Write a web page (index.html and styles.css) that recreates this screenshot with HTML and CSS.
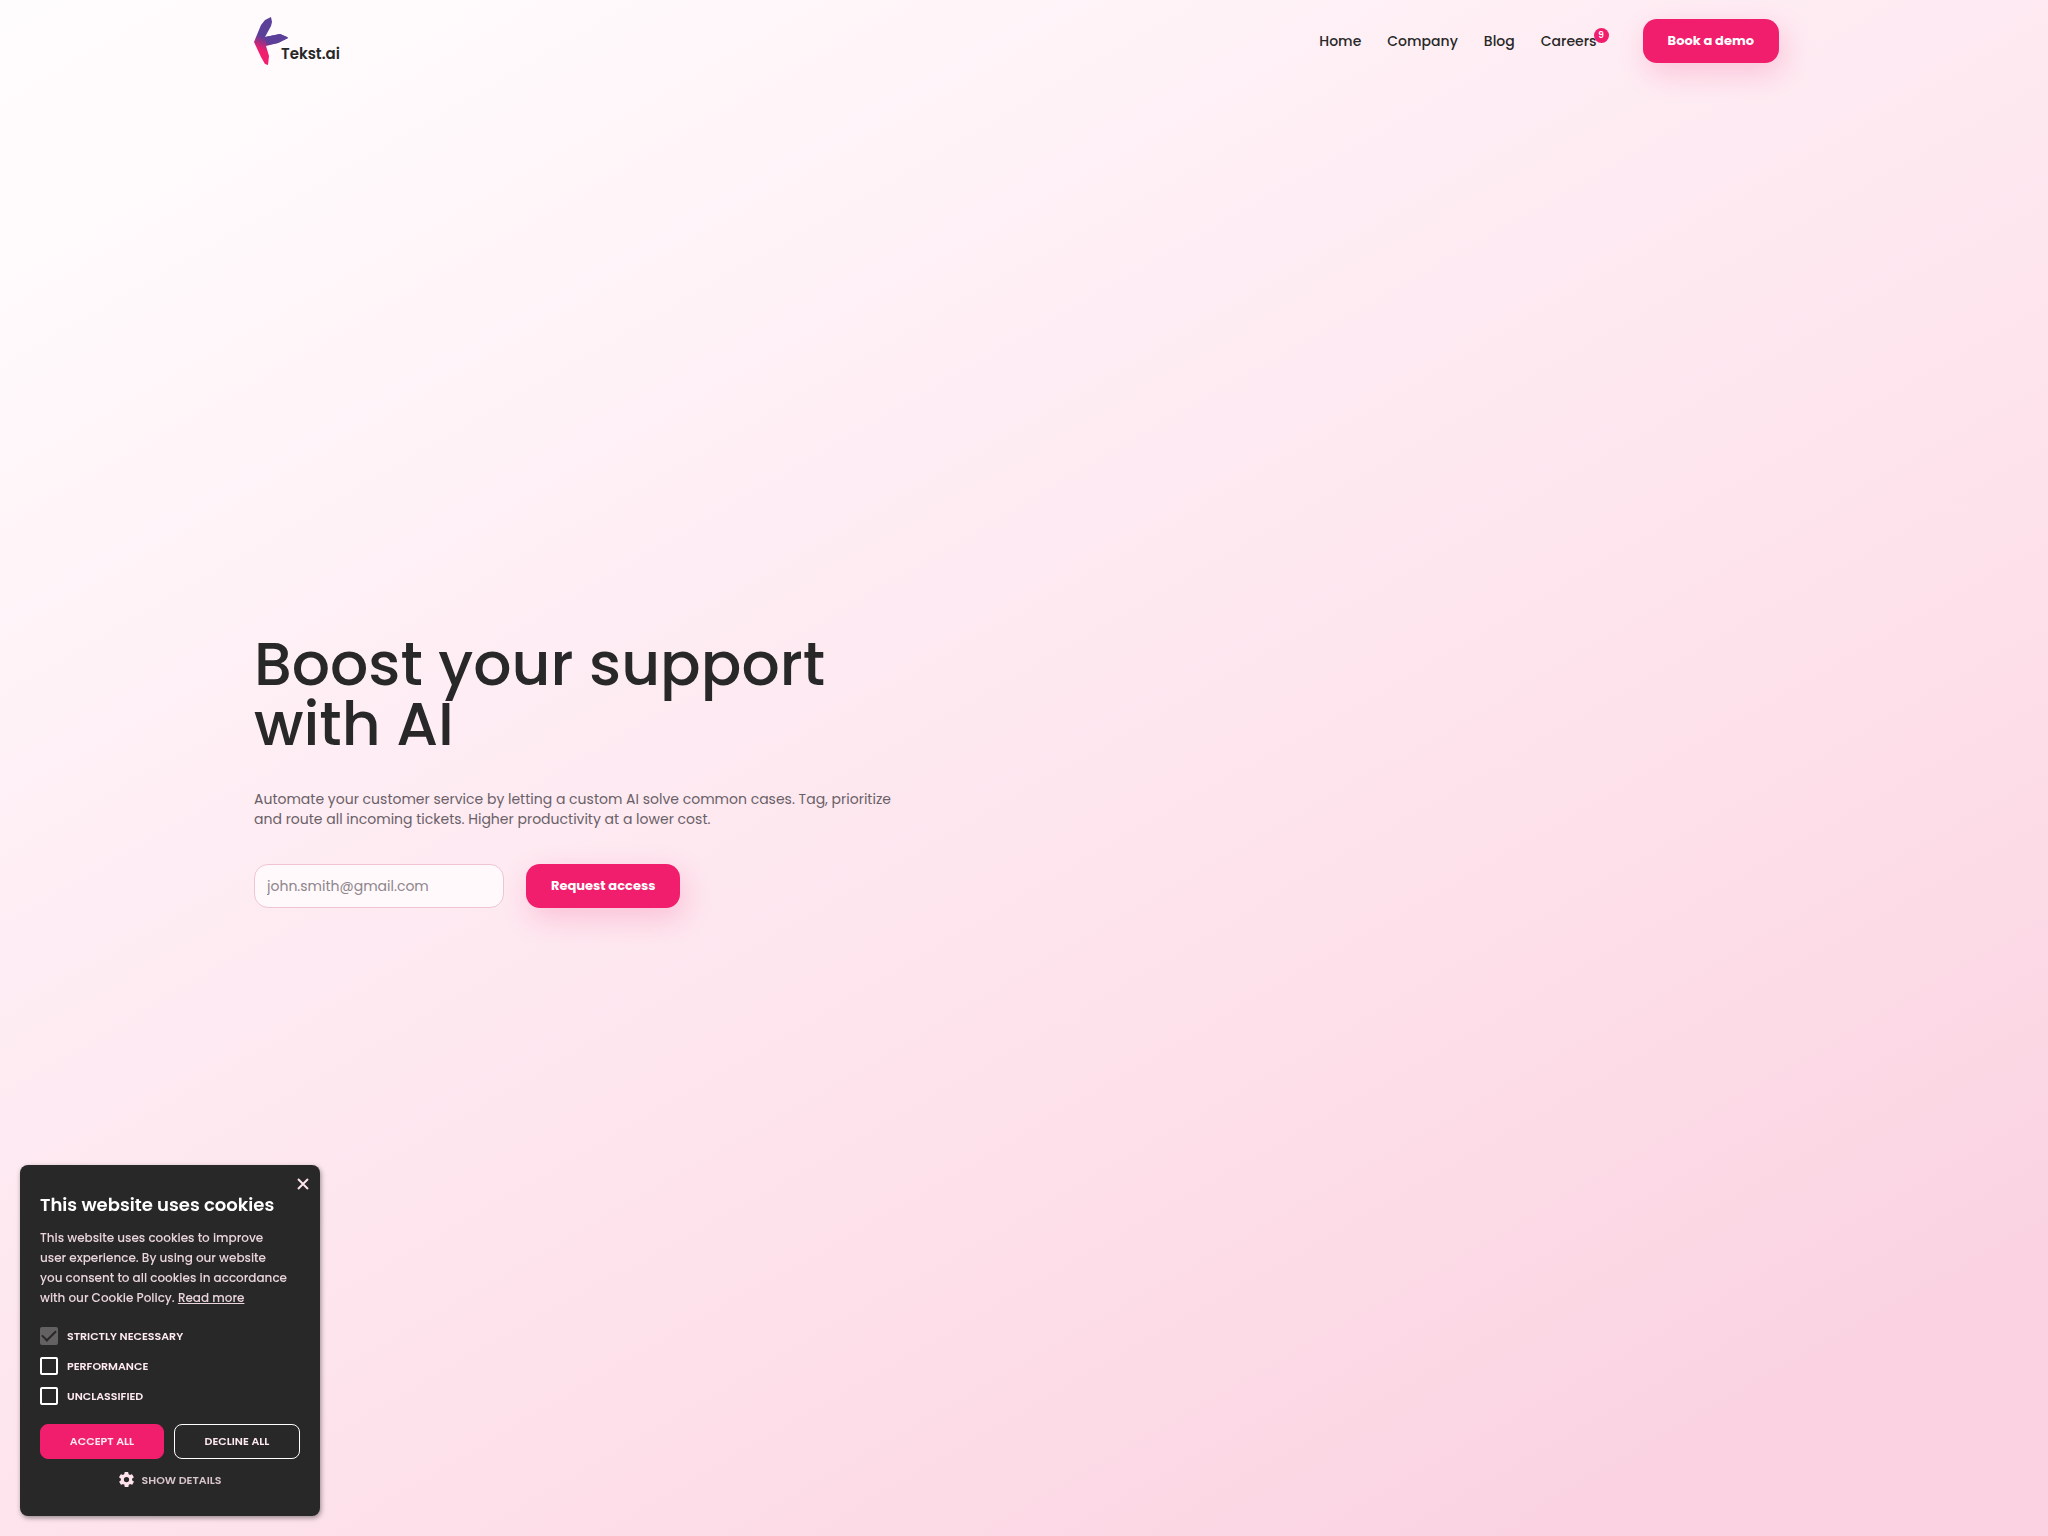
FILE: index.html
```html
<!DOCTYPE html>
<html lang="en">
<head>
  <meta charset="UTF-8" />
  <meta name="viewport" content="width=device-width, initial-scale=1.0"/>
  <title>Tekst.ai</title>
  <link rel="stylesheet" href="styles.css">
</head>
<body>
  <header class="header container">
    <a href="#" class="logo">
      <svg class="logo-mark" viewBox="0 0 36 50" aria-hidden="true">
        <defs>
          <linearGradient id="fade" gradientUnits="userSpaceOnUse" x1="10" y1="21" x2="5" y2="33">
            <stop offset="0" stop-color="#5b3f99"/>
            <stop offset="1" stop-color="#f01e6c"/>
          </linearGradient>
        </defs>
        <path fill="url(#fade)" d="M17 1 L18 6 L17 10 L11 21 L26 18 L33 21 L34 22 L24 27 L12 30 L15 40 L14 49 L11 48 L7 41 L0 26 L7 9 L11 4 Z"/>
        <path fill="#5b3f99" d="M11 21 L26 18 L33 21 L34 22 L24 27 L13 29 Z"/>
      </svg>
      <span class="logo-name">Tekst.ai</span>
    </a>
    <nav class="nav">
      <a href="#">Home</a>
      <a href="#">Company</a>
      <a href="#">Blog</a>
      <a href="#" class="careers">Careers<span class="badge">9</span></a>
      <button type="button" class="btn">Book a demo</button>
    </nav>
  </header>

  <main class="hero container">
    <h1>Boost your support<br>with AI</h1>
    <p>Automate your customer service by letting a custom AI solve common cases. Tag, prioritize<br>and route all incoming tickets. Higher productivity at a lower cost.</p>
    <form class="access-form">
      <input type="email" placeholder="john.smith@gmail.com" aria-label="Email" />
      <button type="submit" class="btn">Request access</button>
    </form>
  </main>

  <aside class="cookies">
    <button type="button" class="close" aria-label="Close">
      <svg viewBox="0 0 12 12" aria-hidden="true"><path d="M1 1 L11 11 M11 1 L1 11"/></svg>
    </button>
    <h2>This website uses cookies</h2>
    <p>This website uses cookies to improve<br>user experience. By using our website<br>you consent to all cookies in accordance<br>with our Cookie Policy. <a href="#">Read more</a></p>
    <div class="options">
      <label><input type="checkbox" checked disabled />Strictly necessary</label>
      <label><input type="checkbox" />Performance</label>
      <label><input type="checkbox" />Unclassified</label>
    </div>
    <div class="actions">
      <button type="button" class="accept">Accept all</button>
      <button type="button" class="decline">Decline all</button>
    </div>
    <button type="button" class="details">
      <svg viewBox="2 2 20 20" aria-hidden="true"><path d="M19.4 13a7.500 7.500 0 0 0 0-2l2.100-1.600a.5.5 0 0 0 .1-.7l-2-3.400a.5.5 0 0 0-.6-.2l-2.500 1a7 7 0 0 0-1.700-1l-.4-2.600a.5.5 0 0 0-.5-.5h-4a.5.5 0 0 0-.5.500l-.4 2.600a7 7 0 0 0-1.700 1l-2.500-1a.5.5 0 0 0-.6.200l-2 3.400a.5.5 0 0 0 .1.700L4.600 11a7.500 7.500 0 0 0 0 2l-2.100 1.600a.5.5 0 0 0-.1.700l2 3.400c.1.200.4.300.6.200l2.500-1a7 7 0 0 0 1.700 1l.4 2.600c0 .3.200.5.500.5h4c.3 0 .5-.2.500-.5l.4-2.600a7 7 0 0 0 1.700-1l2.500 1c.2.100.5 0 .6-.2l2-3.400a.5.5 0 0 0-.1-.7zM12 15.500a3.500 3.500 0 1 1 0-7 3.500 3.500 0 0 1 0 7z"/></svg>
      Show details
    </button>
  </aside>
</body>
</html>
```
FILE: styles.css
```css
* {
  box-sizing: border-box;
  padding: 0;
  margin: 0;
}

body {
  display: flex;
  flex-direction: column;
  min-height: 100vh;
  font-family: Poppins, Inter, sans-serif;
  color: #282828;
  background: linear-gradient(150deg, #fffcfd 0%, #fffafc 10%, #feecf3 38%, #fddfe9 67%, #fad2e1 90%);
}

a {
  color: inherit;
}

button,
input {
  font-family: inherit;
}

button {
  cursor: pointer;
}

.container {
  width: 100%;
  max-width: 1540px;
  margin: 0 auto;
  padding-right: 15px;
}

.header {
  display: flex;
  justify-content: space-between;
  align-items: center;
  height: 82px;
}

.logo {
  display: flex;
  align-items: flex-end;
  height: 50px;
  text-decoration: none;
}

.logo-mark {
  width: 36px;
  height: 50px;
}

.logo-name {
  margin-left: -9px;
  padding-bottom: 4px;
  font-size: 15px;
  font-weight: 600;
  line-height: 16px;
}

.nav {
  display: flex;
  align-items: center;
  gap: 26px;
  font-size: 14px;
  font-weight: 500;
}

.nav a {
  text-decoration: none;
}

.nav .btn {
  margin-left: 20px;
}

.careers {
  position: relative;
}

.badge {
  position: absolute;
  top: -3px;
  right: -12px;
  width: 15px;
  height: 15px;
  border-radius: 50%;
  background-color: #f01e6c;
  color: white;
  font-size: 9px;
  font-weight: 600;
  line-height: 15px;
  text-align: center;
}

.btn {
  height: 44px;
  padding: 0 25px;
  border: none;
  border-radius: 14px;
  background-color: #f01e6c;
  box-shadow: 4px 10px 30px rgba(240, 30, 108, 0.2);
  color: white;
  font-size: 13px;
  font-weight: 700;
}

.hero {
  flex: 1;
  display: flex;
  flex-direction: column;
  justify-content: center;
  padding-bottom: 76px;
}

.hero h1 {
  font-size: 60px;
  font-weight: 500;
  line-height: 60px;
}

.hero p {
  margin: 35px 0;
  color: #696067;
  font-size: 14px;
  line-height: 20px;
}

.access-form {
  display: flex;
  gap: 22px;
}

.access-form input {
  width: 250px;
  height: 44px;
  padding: 0 12px;
  border: 1px solid #f0c4d3;
  border-radius: 14px;
  background-color: #fff9fb;
  font-size: 14px;
}

.access-form input::placeholder {
  color: #8e858b;
}

.cookies {
  position: fixed;
  left: 20px;
  bottom: 20px;
  width: 300px;
  padding: 28px 20px 29px;
  border-radius: 8px;
  background-color: #282828;
  box-shadow: 1px 2px 5px rgba(0, 0, 0, 0.4);
  color: white;
}

.cookies button {
  font-weight: 600;
  text-transform: uppercase;
}

.cookies h2 {
  font-size: 18px;
  font-weight: 600;
  line-height: 24px;
}

.cookies p {
  margin: 11px 0 19px;
  color: #ead5dd;
  font-size: 12px;
  font-weight: 500;
  line-height: 20px;
}

.cookies .close {
  position: absolute;
  top: 13px;
  right: 11px;
  width: 12px;
  height: 12px;
  border: none;
  background: none;
}

.close svg {
  display: block;
  stroke: #ffe3ec;
  stroke-width: 2;
}

.options {
  display: grid;
  gap: 12px;
}

.options label {
  display: flex;
  align-items: center;
  gap: 9px;
  color: #ffeaf1;
  font-size: 11px;
  font-weight: 600;
  line-height: 18px;
  text-transform: uppercase;
}

.options input {
  appearance: none;
  width: 18px;
  height: 18px;
  border: 2px solid white;
  border-radius: 2px;
}

.options input:disabled {
  display: grid;
  place-items: center;
  border: none;
  background-color: #646163;
}

.options input:checked::before {
  content: "";
  width: 12px;
  height: 6px;
  margin-bottom: 4px;
  border-left: 2px solid #282828;
  border-bottom: 2px solid #282828;
  transform: rotate(-45deg);
}

.actions {
  display: grid;
  grid-template-columns: 124px 1fr;
  gap: 10px;
  margin: 19px 0 13px;
}

.actions button {
  height: 35px;
  border: 1px solid white;
  border-radius: 8px;
  background: none;
  color: #ffeaf1;
  font-size: 11px;
}

.actions .accept {
  border-color: #f01e6c;
  background-color: #f01e6c;
}

.details {
  display: flex;
  align-items: center;
  gap: 8px;
  margin: 0 auto;
  border: none;
  background: none;
  color: #d9c6cd;
  font-size: 11px;
  line-height: 14px;
}

.details svg {
  width: 15px;
  height: 15px;
  fill: #ffe3ec;
}
```
